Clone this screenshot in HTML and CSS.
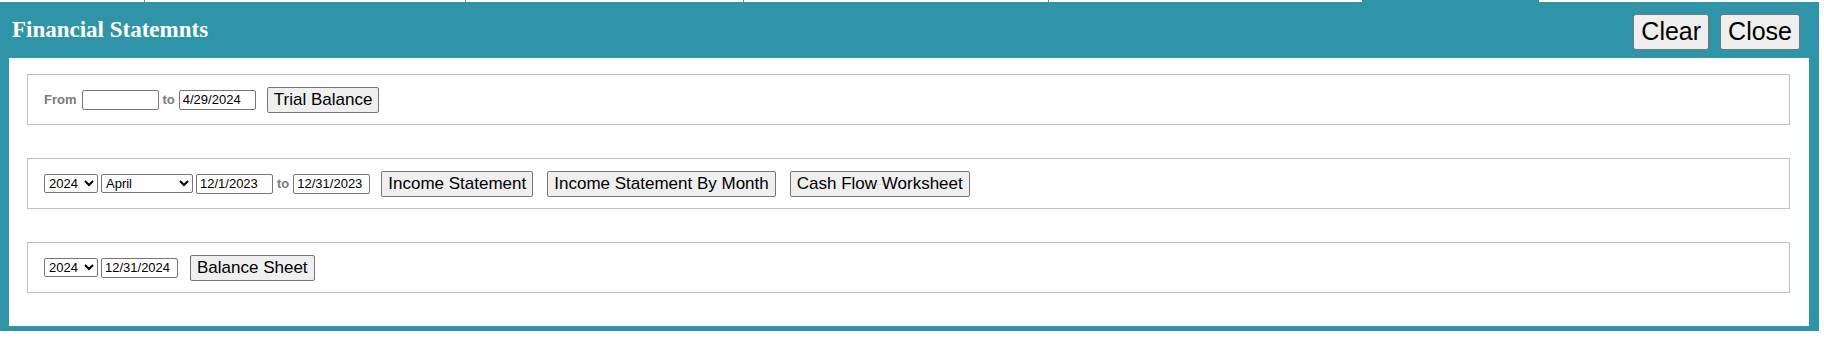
FILE: index.html
```html
<!DOCTYPE html>
<html lang="en">
<head>
    <meta charset="UTF-8">
    <title>Financial Statemnts</title>
    <link rel="stylesheet" href="styles.css">
</head>
<body>
    <!-- tab strip of the page underneath -->
    <div class="tabs">
        <div class="tab tab-1"></div>
        <div class="tab tab-2"></div>
        <div class="tab tab-3"></div>
        <div class="tab tab-4"></div>
        <div class="tab tab-5"></div>
        <div class="tab tab-active"></div>
        <div class="tab tab-rest"></div>
    </div>

    <div class="dialog">
        <div class="dialog-head">
            <h1 class="dialog-title">Financial Statemnts</h1>
            <div class="head-buttons">
                <button class="big-btn">Clear</button>
                <button class="big-btn">Close</button>
            </div>
        </div>

        <div class="dialog-body">
            <!-- trial balance -->
            <div class="panel">
                <span class="lbl lbl-from">From</span>
                <input class="date" type="text" value="">
                <span class="lbl">to</span>
                <input class="date" type="text" value="4/29/2024">
                <button class="btn btn-first">Trial Balance</button>
            </div>

            <!-- income statement -->
            <div class="panel">
                <select class="sel sel-year">
                    <option>2024</option>
                </select>
                <select class="sel sel-month">
                    <option>April</option>
                </select>
                <input class="date" type="text" value="12/1/2023">
                <span class="lbl">to</span>
                <input class="date" type="text" value="12/31/2023">
                <button class="btn btn-first">Income Statement</button>
                <button class="btn">Income Statement By Month</button>
                <button class="btn">Cash Flow Worksheet</button>
            </div>

            <!-- balance sheet -->
            <div class="panel">
                <select class="sel sel-year">
                    <option>2024</option>
                </select>
                <input class="date" type="text" value="12/31/2024">
                <button class="btn btn-first btn-bs">Balance Sheet</button>
            </div>
        </div>
    </div>
</body>
</html>
```

FILE: styles.css
```css
body {
    margin: 0;
    background: #fff;
    font-family: "Liberation Sans", Arial, sans-serif;
}

/* strip above the dialog */
.tabs {
    display: flex;
    height: 2px;
    width: 1819px;
}
.tab {
    height: 2px;
    border-right: 1px solid #6a8f98;
}
.tab-1 { width: 144px; }
.tab-2 { width: 320px; }
.tab-3 { width: 277px; }
.tab-4 { width: 304px; }
.tab-5 { width: 313px; border-right: none; }
.tab-active {
    width: 177px;
    background: #2f94a8;
    border-right: none;
}
.tab-rest { flex: 1; border-right: none; }

.dialog {
    width: 1819px;
    background: #2f94a8;
    padding-bottom: 5px;
}

.dialog-head {
    display: flex;
    align-items: center;
    justify-content: space-between;
    height: 56px;
    padding: 0 19px 0 12px;
}
.dialog-title {
    margin: 0;
    color: #fff;
    font-family: "Liberation Serif", "Times New Roman", serif;
    font-weight: bold;
    font-size: 23px;
}
.head-buttons {
    display: flex;
    gap: 11px;
    padding-top: 3px;
}
.big-btn {
    height: 36px;
    padding: 0 7px;
    font-family: "Liberation Sans", Arial, sans-serif;
    font-size: 25px;
    color: #000;
    background: #efefef;
    border: 1px solid #767676;
    border-radius: 3px;
}

.dialog-body {
    margin: 0 10px 0 9px;
    background: #fff;
    padding: 16px 19px 33px 18px;
    display: flex;
    flex-direction: column;
    gap: 33px;
}

.panel {
    height: 51px;
    box-sizing: border-box;
    border: 1px solid #c0c0c0;
    display: flex;
    align-items: center;
    gap: 3px;
    padding-left: 16px;
}

.lbl {
    font-size: 13px;
    font-weight: bold;
    color: #7a7a7a;
    margin: 0 1px;
}
.lbl-from {
    margin: 0 2px 0 0;
}

.date {
    width: 77px;
    height: 20px;
    box-sizing: border-box;
    padding: 0 3px;
    font-family: "Liberation Sans", Arial, sans-serif;
    font-size: 13px;
    color: #000;
    border: 1px solid #767676;
    border-radius: 2px;
}

.sel {
    height: 19px;
    box-sizing: border-box;
    font-family: "Liberation Sans", Arial, sans-serif;
    font-size: 13px;
    color: #000;
    background: #fff;
    border: 1px solid #767676;
    border-radius: 2px;
}
.sel-year { width: 54px; }
.sel-month { width: 92px; }

.btn {
    height: 26px;
    padding: 1px 6px;
    margin-left: 11px;
    font-family: "Liberation Sans", Arial, sans-serif;
    font-size: 17px;
    color: #000;
    background: #efefef;
    border: 1px solid #767676;
    border-radius: 2px;
}
.btn-first { margin-left: 8px; }
.btn-bs { margin-left: 9px; }
```
